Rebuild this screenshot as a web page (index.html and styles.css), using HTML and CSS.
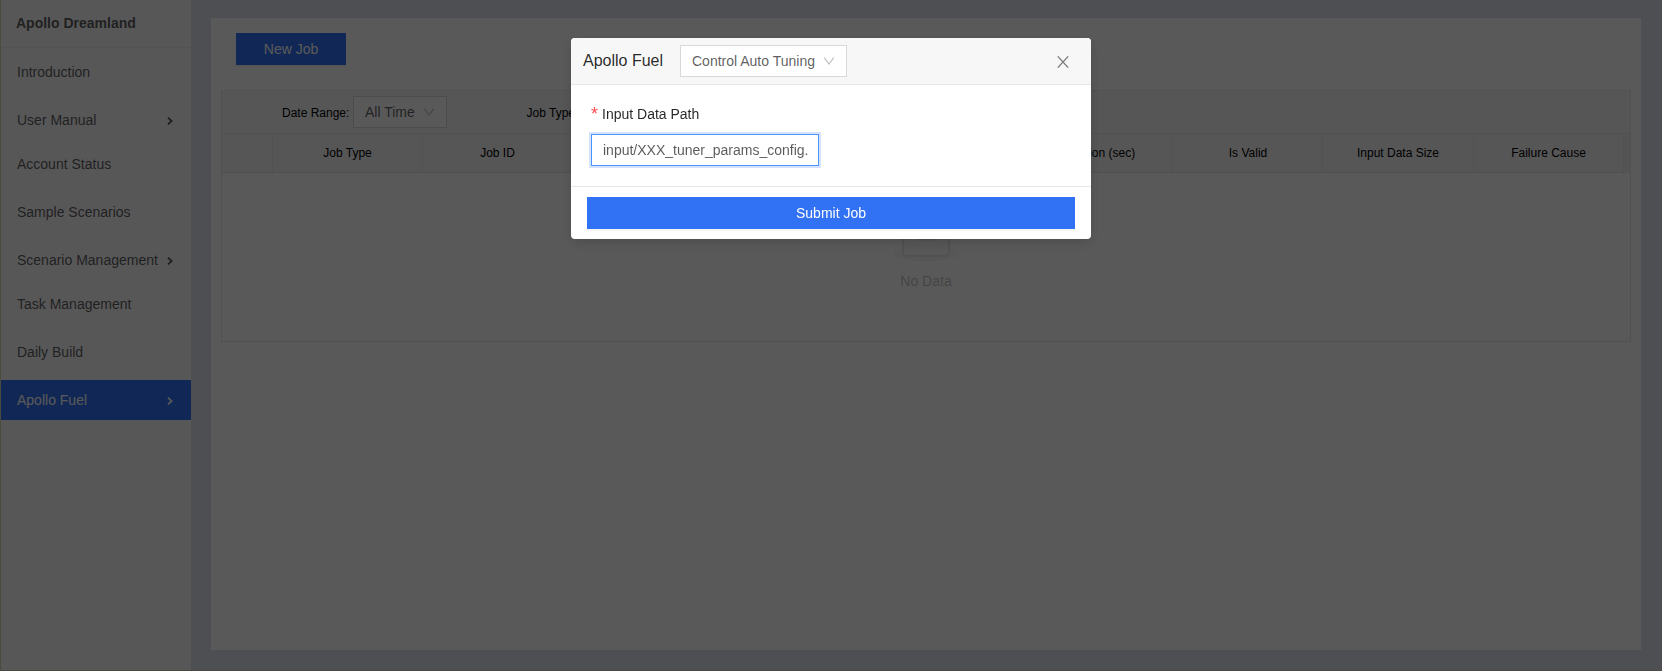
FILE: index.html
```html
<!DOCTYPE html>
<html lang="en">
<head>
<meta charset="utf-8">
<title>Apollo Dreamland</title>
<link rel="stylesheet" href="styles.css">
</head>
<body>
<div class="app">
  <aside class="sidebar">
    <div class="brand">Apollo Dreamland</div>
    <nav class="menu">
      <a class="item">Introduction</a>
      <a class="item sub">User Manual<svg class="chevron" viewBox="0 0 6 8"><path d="M1 .7 4.6 4 1 7.3"/></svg></a>
      <a class="item">Account Status</a>
      <a class="item">Sample Scenarios</a>
      <a class="item sub">Scenario Management<svg class="chevron" viewBox="0 0 6 8"><path d="M1 .7 4.6 4 1 7.3"/></svg></a>
      <a class="item">Task Management</a>
      <a class="item">Daily Build</a>
      <a class="item sub active">Apollo Fuel<svg class="chevron" viewBox="0 0 6 8"><path d="M1 .7 4.6 4 1 7.3"/></svg></a>
    </nav>
  </aside>
  <main class="content">
    <section class="panel">
      <button class="btn new-job">New Job</button>
      <div class="table">
        <div class="filters">
          <label class="filter-label">Date Range:</label>
          <div class="select range">All Time<svg class="arrow" viewBox="0 0 12 8"><path d="M1.2.6 6 7 10.8.6"/></svg></div>
          <label class="filter-label type-label">Job Type:</label>
        </div>
        <div class="thead">
          <div class="th"></div>
          <div class="th">Job Type</div>
          <div class="th">Job ID</div>
          <div class="th"></div>
          <div class="th"></div>
          <div class="th"></div>
          <div class="th">Duration (sec)</div>
          <div class="th th-valid">Is Valid</div>
          <div class="th">Input Data Size</div>
          <div class="th">Failure Cause</div>
          <div class="gutter"></div>
        </div>
        <div class="empty">
          <svg width="64" height="41" viewBox="0 0 64 41">
            <g transform="translate(0 1)" fill="none">
              <ellipse fill="#f5f5f5" cx="32" cy="33" rx="32" ry="7"/>
              <g stroke="#d9d9d9">
                <path d="M55 12.76L44.854 1.258C44.367.474 43.656 0 42.907 0H21.093c-.749 0-1.46.474-1.947 1.257L9 12.761V22h46v-9.24z"/>
                <path fill="#fafafa" d="M41.613 15.931c0-1.605.994-2.93 2.227-2.931H55v18.137C55 33.26 53.68 35 52.05 35h-40.1C10.32 35 9 33.259 9 31.137V13h11.16c1.233 0 2.227 1.323 2.227 2.928v.022c0 1.605 1.005 2.901 2.237 2.901h14.752c1.232 0 2.237-1.308 2.237-2.913v-.007z"/>
              </g>
            </g>
          </svg>
          <p class="empty-text">No Data</p>
        </div>
      </div>
    </section>
  </main>
</div>
<div class="mask">
  <div class="modal">
    <header class="modal-head">
      <span class="modal-title">Apollo Fuel</span>
      <div class="select kind">Control Auto Tuning<svg class="arrow" viewBox="0 0 12 8"><path d="M1.2.6 6 7 10.8.6"/></svg></div>
      <svg class="close" viewBox="0 0 12 12"><path d="M.8.4 11.2 11.6M11.2.4.8 11.6"/></svg>
    </header>
    <div class="modal-body">
      <label class="field-label"><span class="star">*</span>Input Data Path</label>
      <div class="input">input/XXX_tuner_params_config.</div>
    </div>
    <footer class="modal-foot"><button class="btn submit">Submit Job</button></footer>
  </div>
</div>
</body>
</html>
```
FILE: styles.css
```css
* { box-sizing: border-box; }
body {
  margin: 0;
  height: 671px;
  overflow: hidden;
  font: 14px/22px "Liberation Sans", Arial, sans-serif;
  color: rgba(0, 0, 0, .65);
}
.app {
  display: flex;
  height: 671px;
  background: #dde1ed;
  border-left: 1px solid #d9d6bd;
  border-bottom: 1px solid #d0ccb8;
}
.sidebar { width: 190px; flex: none; background: #f8f8fb; }
.brand {
  height: 48px;
  padding: 12px 15px 0;
  font-weight: bold;
  line-height: 22px;
  border-bottom: 1px solid #eeeef0;
}
.menu { display: flex; flex-direction: column; padding-top: 4px; }
.item {
  display: flex;
  align-items: center;
  justify-content: space-between;
  height: 40px;
  padding: 0 18.5px 0 16px;
  margin-bottom: 8px;
  white-space: nowrap;
}
.sub { margin-bottom: 4px; }
.active { background: #3171f3; color: #fff; }
.chevron {
  width: 6px;
  height: 8px;
  margin-top: 2px;
  fill: none;
  stroke: currentColor;
  stroke-width: 1.7;
}
.content { flex: 1; padding: 18px 21px 20px 20px; }
.panel { height: 632px; padding: 15px 10px; background: #fff; }
.btn {
  height: 32px;
  border: 0;
  padding: 0;
  background: #3171f3;
  color: #fff;
  font: inherit;
}
.new-job { display: block; width: 110px; margin-left: 15px; box-shadow: 0 2px 0 rgba(0, 0, 0, .045); }
.table { height: 252px; margin-top: 25px; border: 1px solid #e8e8e8; }
.filters {
  display: flex;
  align-items: center;
  height: 43px;
  padding-left: 60px;
  background: #f6f6f9;
  border-bottom: 1px solid #e8e8ea;
}
.filter-label { width: 71px; padding-top: 1px; font-size: 12px; color: #000; white-space: nowrap; }
.type-label { margin-left: 79.5px; }
.select {
  display: flex;
  align-items: center;
  justify-content: space-between;
  height: 32px;
  padding: 0 11px;
  background: #fff;
  border: 1px solid #d9d9d9;
  white-space: nowrap;
}
.range { width: 94px; margin-top: -1px; }
.arrow { width: 12px; height: 8px; fill: none; stroke: rgba(0, 0, 0, .25); stroke-width: 1.2; }
.thead {
  display: grid;
  grid-template-columns: 51px repeat(7, 150px) 151px 1fr 6px;
  height: 39px;
  background: #f6f6f9;
}
.th {
  display: flex;
  align-items: center;
  justify-content: center;
  font-size: 12px;
  color: #000;
  border-right: 1px solid #ececee;
  border-bottom: 1px solid #e6e6e8;
}
.th-valid { padding-left: 1px; }
.gutter { background: #efefef; }
.empty { display: flex; flex-direction: column; align-items: center; padding: 47px 0 0; }
.empty-text { margin: 9px 0 0; color: rgba(0, 0, 0, .25); }
.mask { position: fixed; inset: 0; padding-top: 38px; background: rgba(0, 0, 0, .65); }
.modal {
  width: 520px;
  height: 201px;
  margin-left: 571px;
  overflow: hidden;
  background: #fff;
  border-radius: 4px;
  box-shadow: 0 4px 12px rgba(0, 0, 0, .15);
}
.modal-head {
  display: flex;
  align-items: center;
  height: 47px;
  padding: 0 22px 0 12px;
  background: #f7f7f7;
  border-bottom: 1px solid #e8e8e8;
}
.modal-title { width: 97px; font-size: 16px; color: rgba(0, 0, 0, .85); }
.kind { width: 167px; }
.close { width: 12px; height: 12px; margin: 2px 0 0 auto; fill: none; stroke: #7c7c7c; stroke-width: 1.35; }
.modal-body { height: 102px; padding: 18px 20px 0; border-bottom: 1px solid #e8e8e8; }
.field-label { display: flex; height: 31px; color: rgba(0, 0, 0, .85); }
.star { width: 11px; font-size: 18px; color: #ff4d4f; }
.input {
  width: 228px;
  height: 32px;
  padding: 0 11px;
  line-height: 30px;
  border: 1px solid #4b93ff;
  box-shadow: 0 0 0 2px #d6e3fd;
  white-space: nowrap;
  overflow: hidden;
}
.modal-foot { padding: 10px 16px; }
.submit { display: block; width: 100%; box-shadow: 0 2px 0 rgba(0, 0, 0, .045); }
```
